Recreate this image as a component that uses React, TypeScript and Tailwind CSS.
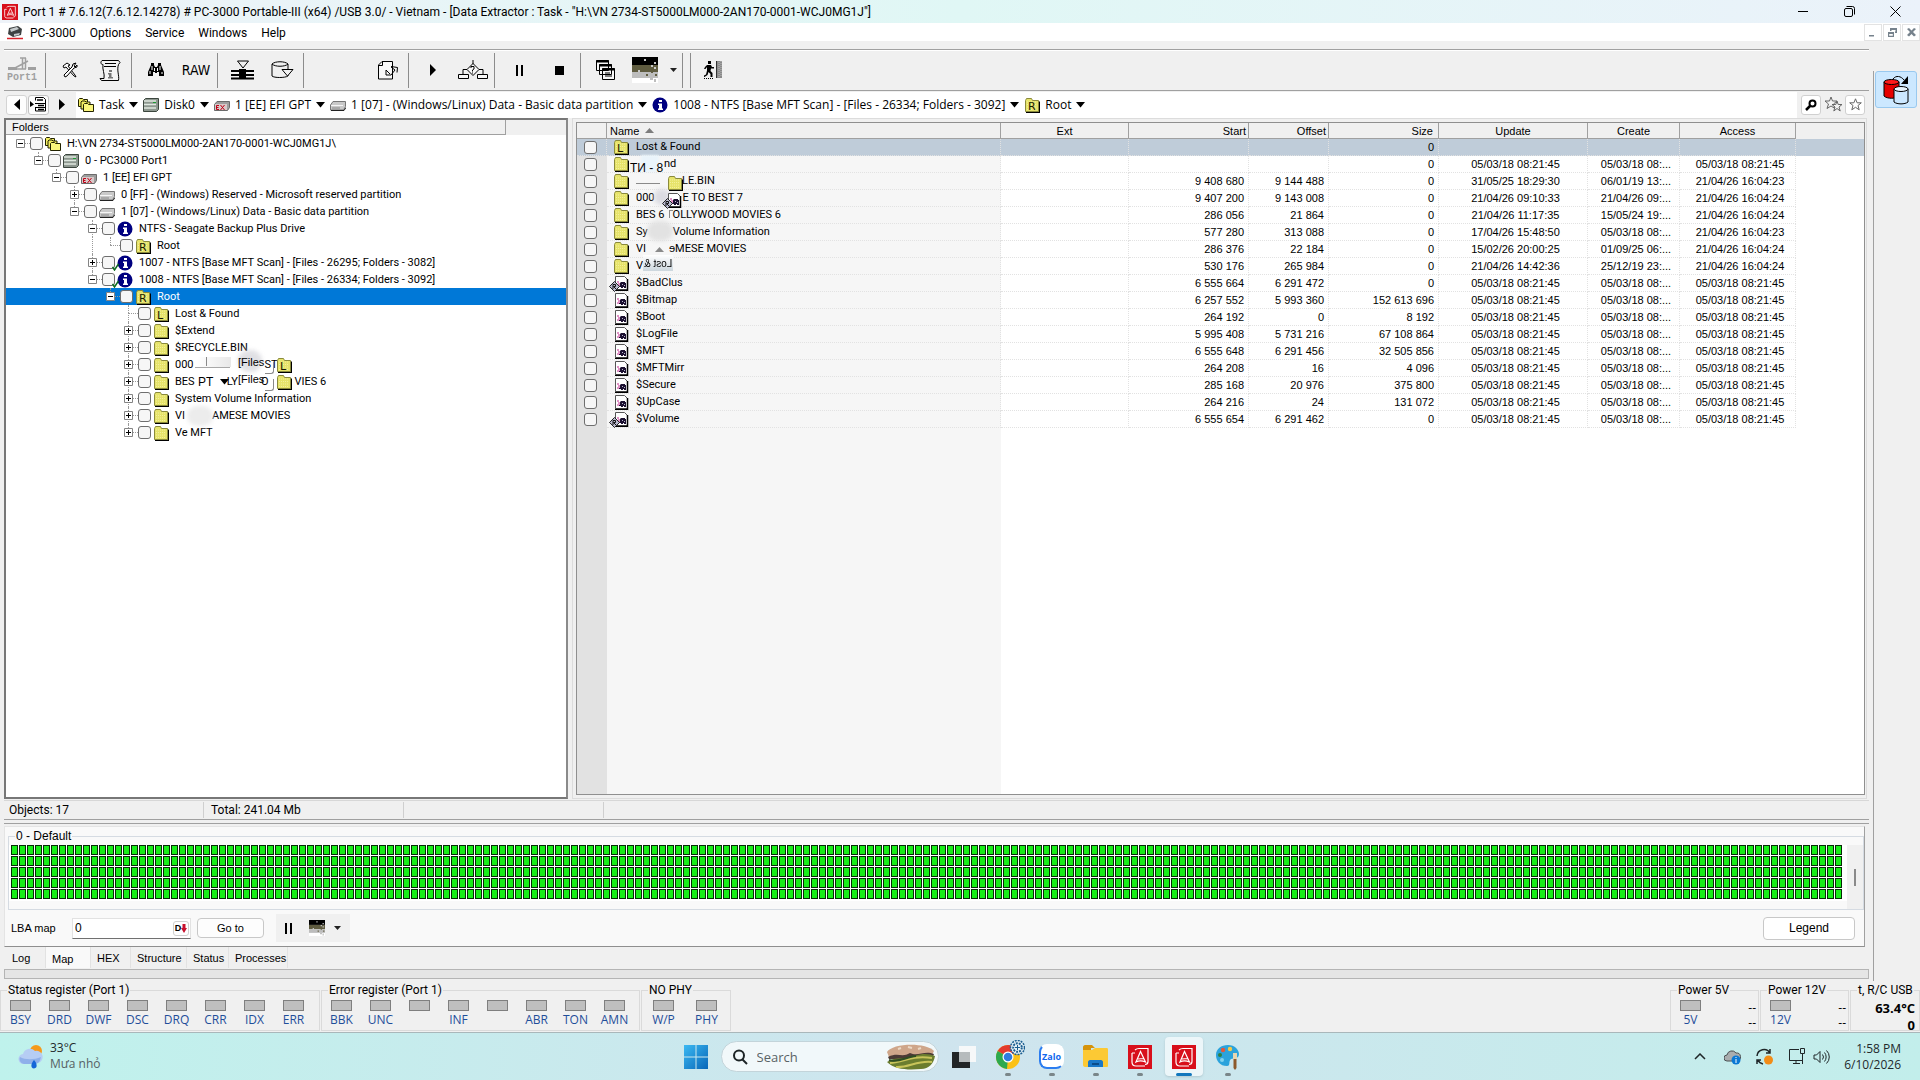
import { type ReactNode } from 'react';

type IconName = 'task' | 'disk' | 'ex' | 'part' | 'info' | 'infoCheck' | 'root' | 'lost' | 'folder' | 'file' | 'fileR';

function FolderShape({ letter }: { letter?: string }) {
  return (
    <>
      <path d="M2 15.5h13.500V4.500" stroke="#000" strokeWidth="2" fill="none" />
      <path d="M1.500 14.500v-11l1-2h5l1 2h6v11z" fill="#e6e36a" stroke="#8a8a3c" />
      <path d="M3 5h10M3 7.500h10M3 10h10M3 12.500h10" stroke="#f4f19c" strokeDasharray="1 1" />
      {letter && (
        <text x="4" y="13" fontSize="11" fontFamily="DejaVu Sans, sans-serif" fill="#1a1a00">
          {letter}
        </text>
      )}
    </>
  );
}

function FileShape() {
  return (
    <>
      <path d="M2.500 1.500h9l3 3v10h-12z" fill="#fff" stroke="#555" />
      <path d="M14.500 4v11.500H2" fill="none" stroke="#000" strokeWidth="1.500" />
      <path d="M4 7h2M5 9h2M4 11h3" stroke="#c0268c" />
      <path d="M7 8l1-1h4v1h1v5h-2v-1h-1v1H8v-1H6v-1h1z" fill="#1b1030" />
      <path d="M9 9.500h1M11 10.500h1" stroke="#b9b9cf" />
    </>
  );
}

function Icon({ name }: { name: IconName }) {
  return (
    <svg width="16" height="16" viewBox="0 0 16 16" className="shrink-0" aria-hidden="true">
      {name === 'task' && (
        <g stroke="#222200" fill="#f2ec62">
          <path d="M.5 9.500v-7l1-1h3l1 1h4v7z" />
          <path d="M3 12v-7l1-1h3l1 1h4v7z" />
          <path d="M5.500 14.500v-7l1-1h3l1 1h5v7z" fill="#fbf67c" />
        </g>
      )}
      {name === 'disk' && (
        <>
          <path d="M2.500 1.500h13v11l-2 2h-13v-11z" fill="#8d978f" stroke="#3c463e" />
          <path d="M1 4h12M1 7.500h12M1 11h12" stroke="#dfe8e0" strokeWidth="1.500" />
          <path d="M10 5.500h3" stroke="#1d9c33" />
        </>
      )}
      {name === 'ex' && (
        <>
          <path d="M3 4.500h12.500v6l-2 3H.5v-6z" fill="#9d9d9d" stroke="#6b6b6b" />
          <path d="M1 7h12v6H1z" fill="#d9c9c9" />
          <path d="M5 8.500H2.500v4H5M2.500 10.500h2M6.500 8l4 5M10.500 8l-4 5" fill="none" stroke="#c00016" />
        </>
      )}
      {name === 'part' && (
        <>
          <path d="M3 4.500h12.500v5l-2 3.500H.5V8z" fill="#c9c9c9" stroke="#777" />
          <path d="M1 8.500h12" stroke="#f5f5f5" />
          <path d="M2 11h8" stroke="#888" />
          <path d="M1 13.500h13l2-3" stroke="#222" fill="none" />
        </>
      )}
      {(name === 'info' || name === 'infoCheck') && (
        <>
          <circle cx="8" cy="8" r="7.500" fill="#000080" />
          <path d="M7 3h3v2H7zM6 6.500h4v5h1V13H6v-1.500h1V8H6z" fill="#fff" />
        </>
      )}
      {name === 'root' && <FolderShape letter="R" />}
      {name === 'lost' && <FolderShape letter="L" />}
      {name === 'folder' && <FolderShape />}
      {(name === 'file' || name === 'fileR') && <FileShape />}
    </svg>
  );
}

function ReparseMark() {
  return (
    <svg width="11" height="11" viewBox="0 0 11 11" className="absolute -left-[4px] top-[6px]" aria-hidden="true">
      <path d="M5.500.5l5 5-5 5-5-5z" fill="#b9b9cf" stroke="#222" />
      <path d="M4 8V3.500h2.500v2H4.500L7 8" fill="none" stroke="#111" />
    </svg>
  );
}

function Caret() {
  return (
    <svg width="9" height="6" viewBox="0 0 9 6" aria-hidden="true">
      <path d="M0 0h9L4.500 5.500z" fill="#000" />
    </svg>
  );
}

function Tick({ label }: { label: string }) {
  return (
    <input
      type="checkbox"
      aria-label={label}
      className="block size-[13px] shrink-0 appearance-none rounded-[3px] border border-[#6e6e6e] bg-[#f6f6f6]"
    />
  );
}

// A broken caption is a run of text pieces and blank widths
type Caption = string | (string | number)[];

function Label({ caption }: { caption: Caption }) {
  if (typeof caption === 'string') return <>{caption}</>;
  return (
    <span className="flex">
      {caption.map((part, i) =>
        typeof part === 'number' ? <span key={i} style={{ width: part }} /> : <span key={i}>{part}</span>,
      )}
    </span>
  );
}

const tree: { level: number; box?: '+' | '-'; icon: IconName; label: Caption; down?: boolean; through?: number; selected?: boolean }[] = [
  { level: 0, box: '-', icon: 'task', label: 'H:\\VN 2734-ST5000LM000-2AN170-0001-WCJ0MG1J\\' },
  { level: 1, box: '-', icon: 'disk', label: '0 - PC3000 Port1' },
  { level: 2, box: '-', icon: 'ex', label: '1 [EE] EFI GPT' },
  { level: 3, box: '+', icon: 'part', label: '0 [FF] - (Windows) Reserved - Microsoft reserved partition', down: true },
  { level: 3, box: '-', icon: 'part', label: '1 [07] - (Windows/Linux) Data - Basic data partition' },
  { level: 4, box: '-', icon: 'info', label: 'NTFS - Seagate Backup Plus Drive', down: true },
  { level: 5, icon: 'root', label: 'Root', through: 4 },
  { level: 4, box: '+', icon: 'infoCheck', label: '1007 - NTFS [Base MFT Scan] - [Files - 26295; Folders - 3082]', down: true },
  { level: 4, box: '-', icon: 'infoCheck', label: '1008 - NTFS [Base MFT Scan] - [Files - 26334; Folders - 3092]' },
  { level: 5, box: '-', icon: 'root', label: 'Root', selected: true },
  { level: 6, icon: 'lost', label: 'Lost & Found', down: true },
  { level: 6, box: '+', icon: 'folder', label: '$Extend', down: true },
  { level: 6, box: '+', icon: 'folder', label: '$RECYCLE.BIN', down: true },
  { level: 6, box: '+', icon: 'folder', label: ['000', 71, 'ST'], down: true },
  { level: 6, box: '+', icon: 'folder', label: ['BES', 32, 'LY', 23, 'O', 26, 'VIES 6'], down: true },
  { level: 6, box: '+', icon: 'folder', label: 'System Volume Information', down: true },
  { level: 6, box: '+', icon: 'folder', label: ['VI', 27, 'AMESE MOVIES'], down: true },
  { level: 6, box: '+', icon: 'folder', label: 'Ve MFT' },
];

const STAMP = '05/03/18 08:21:45';
const SHORT = '05/03/18 08:...';

const files: { icon: IconName; name: Caption; start?: string; offset?: string; size: string; update?: string; create?: string; access?: string }[] = [
  { icon: 'lost', name: 'Lost & Found', size: '0' },
  { icon: 'folder', name: [28, 'nd'], size: '0', update: STAMP, create: SHORT, access: STAMP },
  { icon: 'folder', name: [46, 'LE.BIN'], start: '9 408 680', offset: '9 144 488', size: '0', update: '31/05/25 18:29:30', create: '06/01/19 13:...', access: '21/04/26 16:04:23' },
  { icon: 'folder', name: ['000', 28, 'E TO BEST 7'], start: '9 407 200', offset: '9 143 008', size: '0', update: '21/04/26 09:10:33', create: '21/04/26 09:...', access: '21/04/26 16:04:24' },
  { icon: 'folder', name: ['BES 6', 8, 'OLLYWOOD MOVIES 6'], start: '286 056', offset: '21 864', size: '0', update: '21/04/26 11:17:35', create: '15/05/24 19:...', access: '21/04/26 16:04:24' },
  { icon: 'folder', name: ['Sy', 25, 'Volume Information'], start: '577 280', offset: '313 088', size: '0', update: '17/04/26 15:48:50', create: SHORT, access: '21/04/26 16:04:23' },
  { icon: 'folder', name: ['VI', 23, 'ɘMESE MOVIES'], start: '286 376', offset: '22 184', size: '0', update: '15/02/26 20:00:25', create: '01/09/25 06:...', access: '21/04/26 16:04:24' },
  { icon: 'folder', name: ['V'], start: '530 176', offset: '265 984', size: '0', update: '21/04/26 14:42:36', create: '25/12/19 23:...', access: '21/04/26 16:04:24' },
  { icon: 'fileR', name: '$BadClus', start: '6 555 664', offset: '6 291 472', size: '0', update: STAMP, create: SHORT, access: STAMP },
  { icon: 'file', name: '$Bitmap', start: '6 257 552', offset: '5 993 360', size: '152 613 696', update: STAMP, create: SHORT, access: STAMP },
  { icon: 'file', name: '$Boot', start: '264 192', offset: '0', size: '8 192', update: STAMP, create: SHORT, access: STAMP },
  { icon: 'file', name: '$LogFile', start: '5 995 408', offset: '5 731 216', size: '67 108 864', update: STAMP, create: SHORT, access: STAMP },
  { icon: 'file', name: '$MFT', start: '6 555 648', offset: '6 291 456', size: '32 505 856', update: STAMP, create: SHORT, access: STAMP },
  { icon: 'file', name: '$MFTMirr', start: '264 208', offset: '16', size: '4 096', update: STAMP, create: SHORT, access: STAMP },
  { icon: 'file', name: '$Secure', start: '285 168', offset: '20 976', size: '375 800', update: STAMP, create: SHORT, access: STAMP },
  { icon: 'file', name: '$UpCase', start: '264 216', offset: '24', size: '131 072', update: STAMP, create: SHORT, access: STAMP },
  { icon: 'fileR', name: '$Volume', start: '6 555 654', offset: '6 291 462', size: '0', update: STAMP, create: SHORT, access: STAMP },
];

const crumbs: { icon: IconName; label: string }[] = [
  { icon: 'task', label: 'Task' },
  { icon: 'disk', label: 'Disk0' },
  { icon: 'ex', label: '1 [EE] EFI GPT' },
  { icon: 'part', label: '1 [07] - (Windows/Linux) Data - Basic data partition' },
  { icon: 'info', label: '1008 - NTFS [Base MFT Scan] - [Files - 26334; Folders - 3092]' },
  { icon: 'root', label: 'Root' },
];

function PixelThumb({ className }: { className: string }) {
  return (
    <svg viewBox="0 0 26 26" preserveAspectRatio="none" className={className} aria-hidden="true">
      <path d="M0 0h26v8H0z" fill="#000" />
      <path d="M0 8h26v7H0z" fill="#5f5c40" />
      <path d="M0 15h26v6H0z" fill="#bdbdbd" />
      <path d="M0 21h26v5H0z" fill="#fff" />
      <path d="M12 2h2v2h-2zM22 5h2v2h-2zM19 8h2v2h-2zM6 13h2v2H6zM22 10h2v2h-2z" fill="#c9c9c9" />
      <path d="M14 17h2v2h-2zM19 14h2v2h-2zM23 17h2v2h-2z" fill="#5f5c40" />
      <path d="M18 21h3v2h-3zM22 22h2v3h-2z" fill="#bdbdbd" />
    </svg>
  );
}

function ToolButton({ label, children, className = 'w-[40px]' }: { label: string; children?: ReactNode; className?: string }) {
  return (
    <button type="button" aria-label={label} className={`flex h-full items-center justify-center ${className}`}>
      {children}
    </button>
  );
}

function ToolGroup({ children }: { children: ReactNode }) {
  return <div className="flex h-[35px] border-r border-[#8c8c8c] pr-px pl-[4px]">{children}</div>;
}

function Toolbar() {
  return (
    <div className="mr-[4px] flex h-[42px] items-center border-y border-[#a0a0a0] shadow-[inset_0_1px_#fff]">
      <div className="flex h-[35px] w-[42px] border-r border-[#8c8c8c]">
        <button type="button" className="flex w-[36px] flex-col items-center justify-center text-[#a0a0a0]">
          <svg width="28" height="15" viewBox="0 0 28 15" aria-hidden="true">
            <path d="M0 10h9v3H0zM20 10h8v3h-8z" fill="#a0a0a0" />
            <path d="M7 11l13-7M12 1h6M14.500 1v11M17.500 1v11M9 12h9" stroke="#a0a0a0" strokeWidth="1.500" fill="none" />
          </svg>
          <span className="font-['Liberation_Mono',monospace] text-[10px] leading-[12px] font-bold whitespace-nowrap">Port1</span>
        </button>
      </div>
      <ToolGroup>
        <ToolButton label="Utility settings">
          <svg width="16" height="16" viewBox="0 0 16 16" aria-hidden="true">
            <path d="M1 4l4-3 3 2-2 1 7 9 1 2-2-1L4 5 2 6z" fill="#fff" stroke="#000" />
            <path d="M14 1l-3 1-1 3-8 8 1 2 2-1 7-8 3-1V3l-2 2-1-1z" fill="#fff" stroke="#000" />
          </svg>
        </ToolButton>
        <ToolButton label="Report">
          <svg width="22" height="23" viewBox="0 0 22 23" aria-hidden="true">
            <path d="M3 1.500h16.500l1.500 2-1.500 2c-2 6 1 11 0 16H2.500l-1.500-2h4c1-5-2-9-1-14-2 0-3-2-1-4z" fill="#f4f4f4" stroke="#000" />
            <path d="M6 4.500h11M5 7.500h12" stroke="#000" />
            <path d="M10 11h3v2h-3zM9 14h3.500v4H14v1.500H9V18h1v-2.500H9z" fill="#777" />
          </svg>
        </ToolButton>
      </ToolGroup>
      <ToolGroup>
        <ToolButton label="Find">
          <svg width="16" height="14" viewBox="0 0 16 14" aria-hidden="true">
            <path d="M3 0h3v2l1 2h2l1-2V0h3v2l3 7v4h-5V9H9v1H7V9H5v4H0V9l3-7z" fill="#000" />
            <path d="M4 3v4M2 8v3M12 3v4M9.500 5v3M14 9v2M6.500 5v3" stroke="#fff" />
          </svg>
        </ToolButton>
        <ToolButton label="RAW recovery">
          <span className="font-['DejaVu_Sans_Condensed','DejaVu_Sans',sans-serif] text-[14px]">RAW</span>
        </ToolButton>
      </ToolGroup>
      <ToolGroup>
        <ToolButton label="Build map">
          <svg width="23" height="20" viewBox="0 0 23 20" aria-hidden="true">
            <path d="M6.500 1h11L12 8z" fill="#f0f0f0" stroke="#000" />
            <path d="M0 11h23M0 15h23M0 18.500h23" stroke="#000" strokeWidth="2" />
            <path d="M8 9h7v10H8z" fill="#000" />
          </svg>
        </ToolButton>
        <ToolButton label="Disk menu">
          <svg width="23" height="18" viewBox="0 0 23 18" aria-hidden="true">
            <path d="M1 3v12c2 2 13 2 16 0V3M1 3c3-3 13-3 16 0-3 3-13 3-16 0z" fill="#f0f0f0" stroke="#000" />
            <path d="M11 8.500h11L16.500 15z" fill="#f0f0f0" stroke="#000" />
          </svg>
        </ToolButton>
      </ToolGroup>
      <div className="flex h-[35px] w-[105px] justify-end border-r border-[#8c8c8c]">
        <ToolButton label="Export task">
          <svg width="21" height="19" viewBox="0 0 21 19" aria-hidden="true">
            <path d="M4 .5h10.500v17.500H.5V4zM.5 4.500H4.500V.5" fill="#f8f8f8" stroke="#000" />
            <path d="M8 9l4 4M8 9v5h5l4-5M13 5.500l6.500 1-.5 5M13 6l4 3" fill="none" stroke="#000" />
          </svg>
        </ToolButton>
      </div>
      <ToolGroup>
        <ToolButton label="Start">
          <svg width="6" height="12" viewBox="0 0 6 12" aria-hidden="true">
            <path d="M0 0l6 6-6 6z" />
          </svg>
        </ToolButton>
        <ToolButton label="Algorithm">
          <svg width="30" height="21" viewBox="0 0 30 21" aria-hidden="true">
            <path d="M15 0v4M15 3.500l6 6-6 6-6-6zM9 9.500H5V14M21 9.500h4V14M.5 14.500h10v4H.5zM19.500 14.500h10v4h-10z" fill="#f8f8f8" stroke="#000" />
            <path d="M13 8V6.500h3V9l-1.500 1v1.500M14.500 12.500v1" fill="none" stroke="#000" />
          </svg>
        </ToolButton>
      </ToolGroup>
      <ToolGroup>
        <ToolButton label="Pause">
          <svg width="7" height="11" viewBox="0 0 7 11" aria-hidden="true">
            <path d="M0 0h2v11H0zM5 0h2v11H5z" />
          </svg>
        </ToolButton>
        <ToolButton label="Stop">
          <span className="size-[9px] bg-black" />
        </ToolButton>
      </ToolGroup>
      <ToolGroup>
        <ToolButton label="Task windows">
          <svg width="19" height="20" viewBox="0 0 19 20" aria-hidden="true">
            <path d="M.5.5h12v10H.5zM3.500 4.500h12v10h-12zM6.500 8.500h12v11h-12z" fill="#f8f8f8" stroke="#000" />
            <path d="M0 1.500h13M3 5.500h13M6 9.500h13" stroke="#000" strokeWidth="2" />
            <path d="M9 13h5M9 16h7" stroke="#000" />
          </svg>
        </ToolButton>
        <ToolButton label="Map view">
          <PixelThumb className="h-[26px] w-[26px]" />
        </ToolButton>
        <ToolButton label="Map view options" className="w-[16px]">
          <svg width="7" height="4" viewBox="0 0 7 4" aria-hidden="true">
            <path d="M0 0h7L3.500 4z" fill="#222" />
          </svg>
        </ToolButton>
      </ToolGroup>
      <div className="ml-[7px] h-[35px] border-l border-[#8c8c8c] pl-[2px]">
        <ToolButton label="Exit">
          <svg width="19" height="18" viewBox="0 0 19 18" aria-hidden="true">
            <path d="M4 0h3v3H4zM3 4h4l1 2h2v1.500H7L6.500 10l2 2v4H6.500v-3L4.500 11l-1 3-3 2H0v-1.500l2-1 1-4V6L1.500 8H0l1-2z" />
            <path d="M0 17.500h9" stroke="#000" strokeDasharray="1 1" />
            <path d="M12 0h6v17h-6z" fill="#8a8a8a" />
            <path d="M12.500 0v17" stroke="#333" />
            <path d="M15 1v16M17 0v16" stroke="#bbb" strokeDasharray="1 1" />
          </svg>
        </ToolButton>
      </div>
    </div>
  );
}

function Breadcrumbs() {
  return (
    <nav className="mr-[4px] flex h-[27px] items-center">
      <div className="flex w-[72px] gap-[1px] pl-[2px]">
        <button type="button" aria-label="Back" className="flex h-[20px] w-[21px] items-center justify-center rounded-[3px] border border-[#d4d4d4] bg-[#fdfdfd]">
          <svg width="6" height="11" viewBox="0 0 6 11" aria-hidden="true"><path d="M6 0v11L0 5.500z" /></svg>
        </button>
        <button type="button" aria-label="Branch list" className="flex h-[20px] w-[21px] items-center justify-center rounded-[3px] border border-[#c4c4c4] bg-[#fdfdfd]">
          <svg width="17" height="15" viewBox="0 0 17 15" aria-hidden="true">
            <path d="M5.500 3.500V.5h8l2 2v11.500h-10v-3M5 6.500h11M5 10.500h11" fill="none" stroke="#000" />
            <path d="M7 3h6M8 8.500h6M8 12.500h6" stroke="#000" strokeWidth="1.500" />
            <path d="M0 4l4 3.500L0 10z" />
          </svg>
        </button>
        <button type="button" aria-label="Forward" className="flex h-[20px] w-[23px] items-center justify-center rounded-[3px]">
          <svg width="6" height="11" viewBox="0 0 6 11" aria-hidden="true"><path d="M0 0v11l6-5.500z" /></svg>
        </button>
      </div>
      <ol className="flex h-[26px] flex-1 items-center gap-[5px] bg-white pl-[2px] font-['Open_Sans','Noto_Sans',sans-serif] text-[12px]">
        {crumbs.map((crumb) => (
          <li key={crumb.label}>
            <button type="button" className="flex items-center gap-[5px] whitespace-nowrap">
              <Icon name={crumb.icon} />
              <span>{crumb.label}</span>
              <Caret />
            </button>
          </li>
        ))}
      </ol>
      <div className="flex gap-[2px] px-[4px]">
        <button type="button" aria-label="Search" className="flex size-[20px] items-center justify-center rounded-[3px] border border-[#d0d0d0] bg-white">
          <svg width="12" height="12" viewBox="0 0 12 12" aria-hidden="true">
            <circle cx="7.500" cy="4.500" r="3" fill="none" stroke="#000" strokeWidth="2" />
            <path d="M5 7l-4 4" stroke="#000" strokeWidth="2.500" />
          </svg>
        </button>
        <button type="button" aria-label="Bookmarks" className="flex size-[20px] items-center justify-center">
          <svg width="19" height="17" viewBox="0 0 19 17" fill="#f3f3f3" stroke="#666" aria-hidden="true">
            <path d="M7 1l1.500 4H13l-3.500 3 1.500 4.500-4-2.500-4 2.500L4.500 8 1 5h4.500z" />
            <path d="M13 5l1.200 3.500h3.800l-3 2.500 1.200 4-3.200-2.500L9.800 15l1.200-4-3-2.500h3.800z" />
          </svg>
        </button>
        <button type="button" aria-label="Add bookmark" className="flex size-[20px] items-center justify-center rounded-[3px] border border-[#d0d0d0] bg-white">
          <svg width="13" height="13" viewBox="0 0 13 13" fill="#fff" stroke="#666" aria-hidden="true">
            <path d="M6.500.8l1.600 4h4.200L9 7.500l1.200 4.300-3.700-2.500-3.700 2.500L4 7.500.7 4.800h4.200z" />
          </svg>
        </button>
      </div>
    </nav>
  );
}

// Damaged pieces of the screen buffer lying over the folder tree
function TreeGlitch() {
  return (
    <div className="pointer-events-none absolute left-[169px] top-[213px] h-[120px] w-[160px]">
      <div className="absolute left-[63px] top-[2px] h-[22px] w-[24px] rounded-full bg-[#d9d9de] opacity-80 blur-[2px]" />
      <div className="absolute left-[22px] top-[9px] h-[10px] w-[34px] bg-linear-to-r from-white to-[#e8e8e8]" />
      <div className="absolute left-[20px] top-[19px] h-px w-[35px] bg-[#a8a8a8]" />
      <div className="absolute left-[31px] top-[9px] h-[9px] w-px bg-[#8a8a8a]" />
      <span className="absolute left-[63px] top-[8px] text-[11px] leading-[13px]">[Files</span>
      <div className="absolute left-[90px] top-[14px] h-[12px] w-[9px] rounded-br-[3px] border-r border-b border-[#8a8a8a]" />
      <div className="absolute left-[101px] top-[9px]"><Icon name="lost" /></div>
      <span className="absolute left-[23px] top-[27px] text-[12px] leading-[14px]">PT</span>
      <div className="absolute left-[45px] top-[31px]"><Caret /></div>
      <span className="absolute left-[63px] top-[25px] text-[11px] leading-[13px]">[Files</span>
      <div className="absolute left-[90px] top-[31px] h-[12px] w-[9px] rounded-br-[3px] border-r border-b border-[#8a8a8a]" />
      <div className="absolute left-[101px] top-[26px]"><Icon name="folder" /></div>
      <div className="absolute left-[12px] top-[58px] h-[20px] w-[26px] rounded-full bg-[#ececec] blur-[2px]" />
    </div>
  );
}

function FolderTree() {
  return (
    <section className="flex w-[564px] shrink-0 flex-col border-2 border-[#777] border-r-[#8a8a8a] bg-white">
      <header className="flex h-[15px] bg-[#f0f0f0]">
        <h2 className="w-[500px] border-r border-b border-[#a0a0a0] pl-[6px] leading-[14px]">Folders</h2>
      </header>
      <div className="relative flex-1">
        <ul role="tree" className="font-['Roboto','Liberation_Sans',sans-serif]">
          {tree.map((node, i) => (
            <li
              key={i}
              role="treeitem"
              aria-selected={Boolean(node.selected)}
              className={`relative h-[17px] ${node.selected ? 'bg-[#0078d7] text-white' : ''}`}
            >
              {node.through !== undefined && (
                <span className="absolute top-0 h-[17px] border-l border-dotted border-[#9a9a9a]" style={{ left: 14 + node.through * 18 }} />
              )}
              <div className="flex h-full items-center" style={{ paddingLeft: 10 + node.level * 18 }}>
                <span className="relative h-full w-[14px] shrink-0">
                  {node.level > 0 && <span className="absolute left-[4px] top-0 h-[8px] border-l border-dotted border-[#9a9a9a]" />}
                  {node.down && <span className="absolute left-[4px] top-[8px] h-[9px] border-l border-dotted border-[#9a9a9a]" />}
                  <span className="absolute left-[4px] top-[8px] w-[10px] border-t border-dotted border-[#9a9a9a]" />
                  {node.box && (
                    <button type="button" aria-label={node.box === '+' ? 'Expand' : 'Collapse'} className="absolute left-0 top-[4px] block">
                      <svg width="9" height="9" viewBox="0 0 9 9" className="block">
                        <path d="M.5.5h8v8h-8z" fill="#fff" stroke="#848484" />
                        <path d={node.box === '+' ? 'M2 4.500h5M4.500 2v5' : 'M2 4.500h5'} stroke="#000" />
                      </svg>
                    </button>
                  )}
                </span>
                <Tick label={`Select row ${i + 1}`} />
                <span className="relative ml-[2px] block">
                  <Icon name={node.icon} />
                  {node.icon === 'infoCheck' && (
                    <svg width="7" height="8" viewBox="0 0 7 8" className="absolute -left-[5px] bottom-0" aria-hidden="true">
                      <path d="M.5 4l2 3 4-6" fill="none" stroke="#0a6a1c" strokeWidth="1.500" />
                    </svg>
                  )}
                </span>
                <span className="ml-[6px] whitespace-nowrap"><Label caption={node.label} /></span>
              </div>
            </li>
          ))}
        </ul>
        <TreeGlitch />
      </div>
    </section>
  );
}

// Same kind of damage over the name column of the file list
function ListGlitch() {
  return (
    <div className="pointer-events-none absolute left-[50px] top-[28px] h-[120px] w-[70px]">
      <div className="absolute left-[14px] top-[4px] h-[17px] w-[18px] bg-[#eaf4fb] blur-[1px]" />
      <span className="absolute left-[3px] top-[10px] text-[12px] leading-[15px] whitespace-nowrap">TИ - 8</span>
      <div className="absolute left-[9px] top-[32px] h-px w-[24px] bg-[#8a8a8a]" />
      <div className="absolute left-[27px] top-[38px] h-[16px] w-[16px] rounded-full bg-[#dcdce2] blur-[2px]" />
      <div className="absolute left-[40px] top-[24px]"><Icon name="folder" /></div>
      <div className="absolute left-[39px] top-[41px]">
        <Icon name="file" />
        <ReparseMark />
      </div>
      <div className="absolute left-[42px] top-[59px] h-[8px] w-[4px] border-t border-l border-[#8a8a8a]" />
      <div className="absolute left-[20px] top-[70px] h-[20px] w-[26px] rounded-full bg-[#e2e2e2] blur-[2px]" />
      <svg width="9" height="5" viewBox="0 0 9 5" className="absolute left-[28px] top-[96px]" aria-hidden="true">
        <path d="M0 5h9L4.500 0z" fill="#8a8a8a" />
      </svg>
      <div className="absolute left-[16px] top-[104px] h-[16px] w-[30px] bg-linear-to-b from-white to-[#ccd6dd]" />
      <span className="absolute left-[17px] top-[106px] -scale-x-100 text-[10px] leading-[13px] whitespace-nowrap">Lost &amp;</span>
    </div>
  );
}

const headCell = 'relative h-[16px] border-r border-b border-[#a0a0a0] bg-[#f0f0f0] p-0 font-normal';
const bodyCell = 'h-[17px] border-r border-b border-dotted border-[#e2e2e2] p-0 whitespace-nowrap';

function FileList() {
  return (
    <section className="ml-[4px] flex min-w-0 flex-1 border border-[#dcdcdc] py-[3px] pr-px pl-[3px]">
      <div className="relative flex-1 border border-[#8f8f8f] bg-[linear-gradient(90deg,#e2e2e2_30px,#f6f6f6_30px,#f6f6f6_424px,#fff_424px)]">
        <table className="w-full table-fixed border-separate border-spacing-0">
          <colgroup>
            <col className="w-[30px]" />
            <col className="w-[394px]" />
            <col className="w-[128px]" />
            <col className="w-[120px]" />
            <col className="w-[80px]" />
            <col className="w-[110px]" />
            <col className="w-[149px]" />
            <col className="w-[92px]" />
            <col className="w-[116px]" />
            <col />
          </colgroup>
          <thead>
            <tr>
              <th className={headCell} />
              <th className={`${headCell} pl-[3px] text-left`}>
                <span className="flex items-center gap-[6px]">
                  Name
                  <svg width="9" height="5" viewBox="0 0 9 5" aria-hidden="true"><path d="M0 5h9L4.500 0z" fill="#7d7d7d" /></svg>
                </span>
              </th>
              <th className={`${headCell} text-center`}>Ext</th>
              <th className={`${headCell} pr-[2px] text-right`}>Start</th>
              <th className={`${headCell} pr-[2px] text-right`}>Offset</th>
              <th className={`${headCell} pr-[5px] text-right`}>Size</th>
              <th className={`${headCell} text-center`}>Update</th>
              <th className={`${headCell} text-center`}>Create</th>
              <th className={`${headCell} text-center`}>Access</th>
              <th className="bg-[#f0f0f0] p-0" />
            </tr>
          </thead>
          <tbody>
            {files.map((file, i) => (
              <tr key={i} className={i === 0 ? 'bg-[#bfccd9]' : ''}>
                <td className={bodyCell}>
                  <span className="flex pl-[7px]"><Tick label={`Select file ${i + 1}`} /></span>
                </td>
                <td className={bodyCell}>
                  <span className="flex h-[16px] items-center pl-[6px] font-['Roboto','Liberation_Sans',sans-serif]">
                    <span className="relative">
                      <Icon name={file.icon} />
                      {file.icon === 'fileR' && <ReparseMark />}
                    </span>
                    <span className="ml-[7px]"><Label caption={file.name} /></span>
                  </span>
                </td>
                <td className={bodyCell} />
                <td className={`${bodyCell} pr-[4px] text-right`}>{file.start}</td>
                <td className={`${bodyCell} pr-[4px] text-right`}>{file.offset}</td>
                <td className={`${bodyCell} pr-[4px] text-right`}>{file.size}</td>
                <td className={`${bodyCell} pl-[5px] text-center`}>{file.update}</td>
                <td className={`${bodyCell} pl-[5px] text-center`}>{file.create}</td>
                <td className={`${bodyCell} pl-[5px] text-center`}>{file.access}</td>
                <td className="p-0" />
              </tr>
            ))}
          </tbody>
        </table>
        <ListGlitch />
      </div>
    </section>
  );
}

function MapPanel() {
  return (
    <section className="mr-[8px] border border-t-[#e4e4e4] border-r-[#a0a0a0] border-b-[#8f8f8f] border-l-[#e4e4e4] bg-[#f9f9f9] pl-[3px]">
      <fieldset className="min-w-0 border border-[#d5dbe2] pb-[8px]">
        <legend className="ml-[6px] px-px text-[12px] leading-[18px]">0 - Default</legend>
        <div className="flex bg-white">
          <svg className="ml-[2px] h-[56px] min-w-0 flex-1" aria-label="Sector map">
            <defs>
              <pattern id="cell" width="8" height="11" patternUnits="userSpaceOnUse">
                <rect width="7" height="10" fill="#052b05" />
                <rect x="1" y="1" width="5" height="8" fill="#17ee17" />
              </pattern>
            </defs>
            <rect width="100%" height="55" fill="url(#cell)" />
          </svg>
          <div className="-mb-[8px] ml-[4px] flex w-[16px] items-center justify-center bg-[#f0f0f0]">
            <span className="h-[17px] w-[2px] bg-[#8a8a8a]" />
          </div>
        </div>
      </fieldset>
      <div className="flex h-[36px] items-center">
        <label htmlFor="lba" className="w-[64px] pl-[3px]">LBA map</label>
        <div className="flex h-[21px] w-[119px] items-center border border-[#e2e2e2] border-b-[#707070] bg-white">
          <input id="lba" defaultValue="0" className="w-full min-w-0 bg-transparent pl-[2px] text-[12px] outline-none" />
          <button type="button" aria-label="Decimal" className="mr-px flex h-[15px] w-[16px] shrink-0 items-center justify-center rounded-[3px] border border-[#d0d0d0] bg-white">
            <span className="text-[9px] leading-[11px] font-bold">D</span>
            <svg width="6" height="9" viewBox="0 0 6 9" aria-hidden="true"><path d="M1.500 0h3v4H6L3 9 0 4h1.500z" fill="#c8102e" /></svg>
          </button>
        </div>
        <button type="button" className="ml-[6px] h-[20px] w-[67px] rounded-[4px] border border-[#c8c8c8] bg-[#fdfdfd]">Go to</button>
        <div className="ml-[12px] flex h-[28px] w-[74px] items-center gap-[10px] bg-[#f0f0f0] pl-[9px]">
          <button type="button" aria-label="Pause map">
            <svg width="7" height="11" viewBox="0 0 7 11" aria-hidden="true"><path d="M0 0h2v11H0zM5 0h2v11H5z" /></svg>
          </button>
          <button type="button" aria-label="Map view" className="flex items-center gap-[9px] pl-[7px]">
            <PixelThumb className="h-[16px] w-[16px]" />
            <svg width="7" height="4" viewBox="0 0 7 4" aria-hidden="true"><path d="M0 0h7L3.500 4z" fill="#222" /></svg>
          </button>
        </div>
        <button type="button" className="mr-[9px] ml-auto h-[23px] w-[92px] rounded-[4px] border border-[#c8c8c8] bg-white text-[12px]">Legend</button>
      </div>
    </section>
  );
}

const tabs: { label: string; width: string }[] = [
  { label: 'Log', width: 'w-[40px]' },
  { label: 'Map', width: 'w-[45px]' },
  { label: 'HEX', width: 'w-[40px]' },
  { label: 'Structure', width: 'w-[56px]' },
  { label: 'Status', width: 'w-[42px]' },
  { label: 'Processes', width: 'w-[59px]' },
];

function Lamp({ label }: { label: string }) {
  return (
    <div className="flex w-[39px] flex-col items-center">
      <span className="h-[11px] w-[21px] border border-[#7f7f7f] bg-[#bfbfbf]" />
      <span className="mt-[2px] h-[14px] text-[12px] leading-[14px] text-[#1f4e9a]">{label}</span>
    </div>
  );
}

function Group({ title, className, children }: { title: string; className: string; children: ReactNode }) {
  return (
    <fieldset className={`h-[50px] min-w-0 border border-[#dadada] ${className}`}>
      <legend className="ml-[6px] px-px font-['Roboto','Open_Sans',sans-serif] text-[12px] leading-[18px] whitespace-nowrap">{title}</legend>
      <div className="mt-[1px] flex">{children}</div>
    </fieldset>
  );
}

function Registers() {
  return (
    <div className="flex h-[51px] gap-px font-['Open_Sans','Noto_Sans',sans-serif]">
      <Group title="Status register (Port 1)" className="w-[320px]">
        {['BSY', 'DRD', 'DWF', 'DSC', 'DRQ', 'CRR', 'IDX', 'ERR'].map((r) => <Lamp key={r} label={r} />)}
      </Group>
      <Group title="Error register (Port 1)" className="w-[319px]">
        {['BBK', 'UNC', '', 'INF', '', 'ABR', 'TON', 'AMN'].map((r, i) => <Lamp key={i} label={r} />)}
      </Group>
      <Group title="NO PHY" className="w-[90px]">
        <span className="flex gap-[4px] pl-[2px]">
          {['W/P', 'PHY'].map((r) => <Lamp key={r} label={r} />)}
        </span>
      </Group>
      <div className="ml-auto flex gap-px">
        {['5V', '12V'].map((v) => (
          <Group key={v} title={`Power ${v}`} className="w-[89px]">
            <Lamp label={v} />
            <div className="ml-auto flex flex-col pr-[2px] text-[12px] leading-[15px]">
              <span>--</span>
              <span>--</span>
            </div>
          </Group>
        ))}
        <Group title="t, R/C USB" className="w-[70px]">
          <div className="flex w-full flex-col pr-[4px] text-right text-[13px] leading-[17px] font-bold">
            <span>63.4°C</span>
            <span>0</span>
          </div>
        </Group>
      </div>
    </div>
  );
}

function PcLogo({ className }: { className: string }) {
  return (
    <svg viewBox="0 0 24 24" className={className} aria-hidden="true">
      <path d="M0 0h24v24H0z" fill="#d80f1b" />
      <path d="M7 5c1-1 2-1.500 4-1.500h9v13c0 2-1 3-3 3M4 8v9c0 3 1 4 4 4h9M4 8h3" fill="none" stroke="#fff" strokeWidth="1.200" />
      <path d="M12.500 6.500L8 17c3-1.500 6-1.500 9.500 0zM10 14l6-.5" fill="none" stroke="#fff" strokeWidth="1.200" />
    </svg>
  );
}

function TaskItem({ label, active, running, children }: { label: string; active?: boolean; running?: boolean; children: ReactNode }) {
  return (
    <button
      type="button"
      aria-label={label}
      className={`relative flex h-[39px] w-[38px] items-center justify-center rounded-[4px] ${active ? 'bg-[#ecf6f9] shadow-sm' : ''}`}
    >
      {children}
      {running && (
        <span className={`absolute bottom-0 h-[3px] rounded-full ${active ? 'w-[16px] bg-[#1277bd]' : 'w-[6px] bg-[#7a8689]'}`} />
      )}
    </button>
  );
}

function Taskbar() {
  return (
    <footer className="relative flex h-[48px] items-center justify-center border-t border-[#a9b7ba] bg-linear-to-r from-[#bff2ec] via-[#cfe4ee] to-[#c2eeeb] font-['Open_Sans','Noto_Sans',sans-serif]">
      <button type="button" className="absolute top-[7px] left-[18px] flex items-center gap-[7px] text-left text-[12px] leading-[16px] text-[#22292b]">
        <svg width="25" height="25" viewBox="0 0 25 25" aria-hidden="true">
          <circle cx="18" cy="7" r="6" fill="#f59a1b" />
          <path d="M6 20a5 5 0 0 1-1-10 7 7 0 0 1 12-3 6 6 0 0 1 3 12z" fill="#b6cdf4" />
          <path d="M6 20a5 5 0 0 1-4-7c5 3 14 3 21 0-1 4-2 6-5 7z" fill="#8fb0ea" />
          <path d="M16 16c3 3 4 8 0 8.500-4-.500-3-5 0-8.500z" fill="#1565d8" />
        </svg>
        <span>
          33°C
          <br />
          <span className="text-[#566164]">Mưa nhỏ</span>
        </span>
      </button>
      <div className="flex items-center gap-[6px] pl-[3px]">
        <TaskItem label="Start">
          <svg width="24" height="24" viewBox="0 0 24 24" aria-hidden="true">
            <defs>
              <linearGradient id="win" x1="0" y1="0" x2="1" y2="1">
                <stop offset="0" stopColor="#3cb9f2" />
                <stop offset="1" stopColor="#0766b8" />
              </linearGradient>
            </defs>
            <path d="M0 0h11.500v11.500H0zM12.500 0H24v11.500H12.500zM0 12.500h11.500V24H0zM12.500 12.500H24V24H12.500z" fill="url(#win)" />
          </svg>
        </TaskItem>
        <label className="relative flex h-[31px] w-[218px] items-center rounded-full border border-[#c3d4da] bg-[#f1f8fa] pl-[10px]">
          <svg width="16" height="16" viewBox="0 0 16 16" fill="none" stroke="#1d2426" strokeWidth="2" aria-hidden="true">
            <circle cx="7" cy="6.500" r="5" />
            <path d="M10.500 10.500L15 15" />
          </svg>
          <input aria-label="Search" placeholder="Search" className="ml-[9px] w-[110px] bg-transparent text-[13px] outline-none placeholder:text-[#596366]" />
          <svg width="50" height="26" viewBox="0 0 50 26" className="absolute right-[2px]" aria-hidden="true">
            <path d="M1 8C6-1 40-2 48 7l-3 6H3z" fill="#cfa68a" />
            <path d="M2 13c10-5 14 1 22-4 8 4 14-3 24 1l-2 5H3z" fill="#4b3a36" />
            <path d="M1 18c8-6 20-2 28-6 8-3 14-2 20 0-1 7-6 13-14 13-12 1-26 1-34-7z" fill="#6b7d2f" />
            <path d="M4 19c12 0 20-8 42-5M10 23c12 1 22-7 36-5" stroke="#c8c45a" strokeWidth="2" fill="none" />
            <path d="M3 16c9 3 17-3 27-4" stroke="#2f4d22" strokeWidth="2" fill="none" />
            <path d="M12 5l3-1M22 3l4 1M32 5l3-1" stroke="#ecd9c6" strokeWidth="2" />
          </svg>
        </label>
        <TaskItem label="Task view">
          <svg width="24" height="24" viewBox="0 0 24 24" aria-hidden="true">
            <path d="M7 1h17v16H7z" fill="#f6f8f9" />
            <path d="M0 7h18v16H0z" fill="#222527" />
            <path d="M7 7h11v10H7z" fill="#b6bbbd" />
          </svg>
        </TaskItem>
        <TaskItem label="Chrome" running>
          <svg width="30" height="30" viewBox="0 0 30 30" className="-mt-[3px] ml-[4px] shrink-0" aria-hidden="true">
            <circle cx="13" cy="17" r="12" fill="#fbc116" />
            <path d="M13 17L2.600 11A12 12 0 0 1 23.400 11z" fill="#e33b2e" />
            <path d="M13 17L2.600 11A12 12 0 0 0 12 29z" fill="#2da94f" />
            <circle cx="13" cy="17" r="5.500" fill="#fff" />
            <circle cx="13" cy="17" r="4.300" fill="#2f7de1" />
            <circle cx="22.500" cy="7.500" r="7" fill="#e6f1f6" stroke="#1c5f91" strokeWidth="1.500" strokeDasharray="2 1" />
            <circle cx="22.500" cy="7.500" r="4.300" fill="none" stroke="#1c5f91" strokeWidth="2" strokeDasharray="2 1" />
            <path d="M20 7.500h5M22.500 5v5" stroke="#1c5f91" />
          </svg>
        </TaskItem>
        <TaskItem label="Zalo" running>
          <span className="flex size-[25px] items-center justify-center rounded-[8px] border-2 border-[#2b7df0] border-t-white border-r-white bg-white">
            <span className="text-[9px] font-bold text-[#1167ee]">Zalo</span>
          </span>
        </TaskItem>
        <TaskItem label="File Explorer" running>
          <svg width="25" height="23" viewBox="0 0 25 23" aria-hidden="true">
            <path d="M0 2c0-1 1-2 2-2h7l3 3h-4v5H0z" fill="#d6930b" />
            <path d="M0 5h9l3-2h12c1 0 1 1 1 2v16c0 1-1 1-2 1H2c-1 0-2-1-2-2z" fill="#fcc934" />
            <path d="M5 22v-5c0-1 1-2 2-2h11c1 0 2 1 2 2v5z" fill="#1a78c8" />
            <path d="M9 19h7" stroke="#0a4c8a" strokeWidth="2" />
          </svg>
        </TaskItem>
        <TaskItem label="PC-3000" running><PcLogo className="size-[24px]" /></TaskItem>
        <TaskItem label="PC-3000 Data Extractor" running active><PcLogo className="size-[24px]" /></TaskItem>
        <TaskItem label="Paint" running>
          <svg width="24" height="26" viewBox="0 0 24 26" aria-hidden="true">
            <path d="M12 1c7 0 11 5 11 9 0 5-5 4-8 5-3 2 0 7-4 7C4 22 0 17 0 11S5 1 12 1z" fill="#2ba3dc" />
            <circle cx="4" cy="11" r="2" fill="#2f7f3f" />
            <circle cx="7" cy="6" r="2.200" fill="#e3573a" />
            <circle cx="14" cy="5" r="2.200" fill="#f6c945" />
            <circle cx="6" cy="16" r="2" fill="#7fd3ef" />
            <path d="M17 9h4v6h-4z" fill="#e7d6b0" />
            <path d="M17.500 15h3v9l-1.500 2-1.500-2z" fill="#8d5a2b" />
          </svg>
        </TaskItem>
      </div>
      <div className="absolute top-0 right-[19px] flex h-full items-center text-[#1f2628]">
        <svg width="12" height="7" viewBox="0 0 12 7" fill="none" stroke="currentColor" strokeWidth="1.500" className="mr-[18px]" aria-hidden="true">
          <path d="M1 6l5-5 5 5" />
        </svg>
        <svg width="17" height="16" viewBox="0 0 17 16" className="mr-[15px]" aria-hidden="true">
          <path d="M3 12a3 3 0 0 1 0-6 5 5 0 0 1 9-2 4 4 0 0 1 1 8z" fill="#a9adaf" stroke="#4b5153" />
          <circle cx="12" cy="11" r="4.500" fill="#0a78d4" />
          <path d="M12 10v4M12 8v1" stroke="#fff" />
        </svg>
        <svg width="18" height="17" viewBox="0 0 18 17" className="mr-[14px]" aria-hidden="true">
          <path d="M1 8a7 7 0 0 1 13-3M14 1v4h-4M2 12a7 7 0 0 0 5 4M1 16v-4h4" fill="none" stroke="currentColor" strokeWidth="1.500" />
          <circle cx="12.500" cy="12" r="4.500" fill="#f28c17" />
        </svg>
        <svg width="18" height="17" viewBox="0 0 18 17" fill="none" stroke="currentColor" className="mr-[7px]" aria-hidden="true">
          <path d="M11 1.500H1.500v11h13V8M5 15.500h7M8 12.500v3M12.500.5h4v5h-4zM14.500 6v10" />
        </svg>
        <svg width="17" height="14" viewBox="0 0 17 14" fill="none" stroke="currentColor" className="mr-[14px]" aria-hidden="true">
          <path d="M1 5h2.500L7 1.500v11L3.500 9H1zM9.500 4.500a4 4 0 0 1 0 5M11.500 2.500a7 7 0 0 1 0 9M13.500.5a9 9 0 0 1 0 13" />
        </svg>
        <div className="text-right text-[12px] leading-[16px] text-[#22292b]">
          1:58 PM
          <br />
          6/10/2026
        </div>
      </div>
    </footer>
  );
}

function TitleBar() {
  return (
    <header className="flex h-[23px] items-center bg-linear-to-r from-[#eef3f9] via-[#e0f7f5] to-[#ebf2fa] pr-[2px] pl-[2px]">
      <PcLogo className="size-[16px]" />
      <h1 className="ml-[5px] font-['Roboto','Open_Sans',sans-serif] text-[12px] whitespace-nowrap">
        {'Port 1 # 7.6.12(7.6.12.14278) # PC-3000 Portable-III (x64) /USB 3.0/ - Vietnam - [Data Extractor : Task - "H:\\VN 2734-ST5000LM000-2AN170-0001-WCJ0MG1J"]'}
      </h1>
      <div className="ml-auto flex h-full">
        <button type="button" aria-label="Minimize" className="flex w-[46px] items-center justify-center">
          <span className="h-px w-[10px] bg-black" />
        </button>
        <button type="button" aria-label="Restore" className="flex w-[46px] items-center justify-center">
          <svg width="11" height="11" viewBox="0 0 11 11" fill="none" stroke="#000" aria-hidden="true">
            <rect x=".5" y="2.500" width="8" height="8" rx="1.500" />
            <path d="M2.500.5h6a2 2 0 0 1 2 2v6" />
          </svg>
        </button>
        <button type="button" aria-label="Close" className="flex w-[46px] items-center justify-center">
          <svg width="11" height="11" viewBox="0 0 11 11" stroke="#000" aria-hidden="true"><path d="M.5.5l10 10M10.500.5l-10 10" /></svg>
        </button>
      </div>
    </header>
  );
}

function MenuBar() {
  return (
    <nav className="flex h-[18px] items-center bg-white pt-px pl-[7px] font-['Roboto','Open_Sans',sans-serif] text-[12px]">
      <svg width="16" height="14" viewBox="0 0 16 14" className="mr-[7px]" aria-hidden="true">
        <path d="M2 2l9-2 4 3-1 6-8 2-5-3z" fill="#3e4142" />
        <path d="M3 3l7-2 2 2-8 3zM7 8l6-1-1 2-5 1z" fill="#c6cbcd" />
        <path d="M0 12.500h16" stroke="#d9222a" strokeWidth="1.500" />
      </svg>
      <ul className="flex gap-[14px]">
        {['PC-3000', 'Options', 'Service', 'Windows', 'Help'].map((item) => (
          <li key={item}><button type="button">{item}</button></li>
        ))}
      </ul>
      <div className="ml-auto flex gap-px self-start">
        {['M1 8h5v1.500H1z', 'M3 1h7v5H8V4.500h.500V3H4.500v1H3zM1 5h6v5H1zM2.200 7v1.800h3.600V7z', 'M1 2l2-1 2.500 2.500L8 1l2 1-3 3 3 3-2 1.500L5.500 7 3 9.500 1 8l3-3z'].map((d, i) => (
          <button key={i} type="button" aria-label={['Minimize child', 'Restore child', 'Close child'][i]} className="flex h-[17px] w-[18px] items-center justify-center border border-[#e3e3e3] bg-white">
            <svg width="11" height="11" viewBox="0 0 11 11" aria-hidden="true"><path d={d} fill="#76828c" fillRule="evenodd" /></svg>
          </button>
        ))}
      </div>
    </nav>
  );
}

export default function App() {
  return (
    <div className="flex min-h-screen flex-col bg-[#f0f0f0] font-['Liberation_Sans',Arial,sans-serif] text-[11px] leading-[14px] text-black">
      <TitleBar />
      <MenuBar />
      <main className="flex flex-1">
        <div className="flex min-w-0 flex-1 flex-col pt-[8px] pl-[4px]">
          <Toolbar />
          <Breadcrumbs />
          <div className="mr-[6px] flex flex-1">
            <FolderTree />
            <FileList />
          </div>
          <div className="mt-px mr-[4px] flex h-[20px] items-center border-t border-b border-t-[#d7d7d7] border-b-[#a0a0a0] font-['Roboto','Open_Sans',sans-serif] text-[12px]">
            <span className="flex h-[16px] w-[200px] items-center border-r border-[#cfcfcf] pl-[5px]">Objects: 17</span>
            <span className="flex h-[16px] w-[200px] items-center border-r border-[#cfcfcf] pl-[7px]">Total: 241.04 Mb</span>
            <span className="h-[16px] w-[200px] border-r border-[#cfcfcf]" />
          </div>
          <div className="mt-[3px] mr-[4px] mb-[2px] border-t border-[#a0a0a0]" />
          <MapPanel />
          <div role="tablist" className="flex pl-[2px]">
            {tabs.map((tab) => (
              <button
                key={tab.label}
                type="button"
                role="tab"
                aria-selected={tab.label === 'Map'}
                className={`h-[21px] border-r border-[#e2e2e2] pl-[6px] text-left ${tab.width} ${tab.label === 'Map' ? 'bg-[#f9f9f9] pt-[3px]' : ''}`}
              >
                {tab.label}
              </button>
            ))}
          </div>
          <div className="mt-px mr-[4px] mb-[2px] h-[10px] border border-[#b4b4b4] bg-[#e5e5e5]" />
        </div>
        <aside className="mt-[30px] w-[47px] border-l border-[#a0a0a0] pl-px">
          <button type="button" aria-label="Data Extractor task" className="flex h-[37px] w-[42px] items-center justify-center rounded-[3px] border border-[#99c9ef] bg-[#cce8ff]">
            <svg width="26" height="30" viewBox="0 0 26 30" aria-hidden="true">
              <path d="M1 7v14c3 3 12 3 15 0V7" fill="#e60000" stroke="#000" />
              <ellipse cx="8.500" cy="7" rx="7.500" ry="2.500" fill="#ff1a1a" stroke="#000" />
              <path d="M11 14v13c3 2.500 11 2.500 14 0V14" fill="#cce8ff" stroke="#000" />
              <ellipse cx="18" cy="14" rx="7" ry="2.500" fill="#e8f5ff" stroke="#000" />
              <path d="M10 4c3-4 8-3 11 1" fill="none" stroke="#000" />
              <path d="M25 1v8h-7z" />
            </svg>
          </button>
        </aside>
      </main>
      <Registers />
      <Taskbar />
    </div>
  );
}
